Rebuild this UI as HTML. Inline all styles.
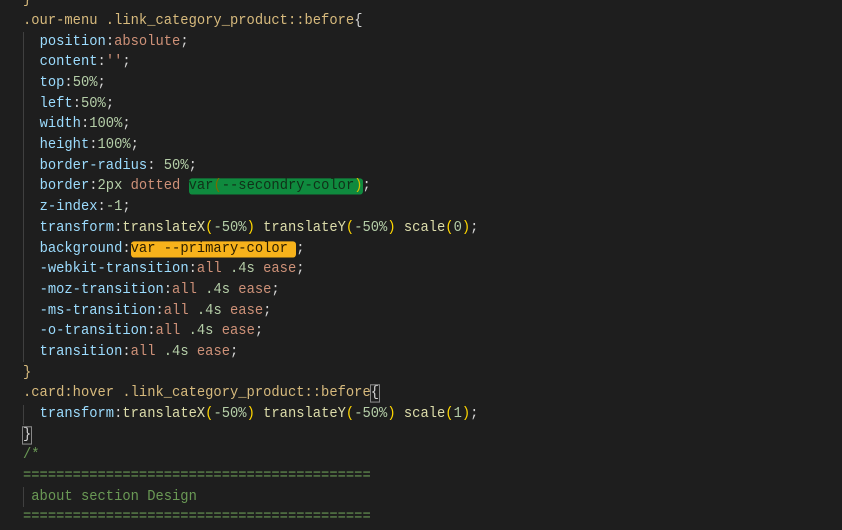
<!DOCTYPE html>
<html><head><meta charset="utf-8"><style>
html,body{margin:0;padding:0;background:#1e1e1e;width:842px;height:516px;overflow:hidden}
.c{position:absolute;left:23px;top:2px;font-family:"Liberation Mono",monospace;font-size:13.8px;color:#d4d4d4;white-space:pre}
.l{position:absolute;left:0;height:20.68px;line-height:20.68px;transform:scaleY(1.08);transform-origin:0 50%}
.s{color:#d7ba7d}.p{color:#9cdcfe}.v{color:#ce9178}.n{color:#b5cea8}.f{color:#dcdcaa}.b{color:#ffd700}.cm{color:#6a9955}
.hg{background:#0f8a3e;color:#103018;border-radius:3px}
.ho{background:#f7b21b;color:#2a1d00;border-radius:3px}
.g{position:absolute;left:23px;width:1px;background:#404040}
.cur{outline:1px solid #888}
</style></head><body>
<div class="g" style="top:32px;height:330px"></div>
<div class="g" style="top:405px;height:20px"></div>
<div class="g" style="top:487px;height:20px"></div>
<div class="c">
<div class="l s" style="top:-11px">}</div>
<div class="l" style="top:10px"><span class="s">.our-menu .link_category_product::before</span>{</div>
<div class="l" style="top:30.7px">  <span class="p">position</span>:<span class="v">absolute</span>;</div>
<div class="l" style="top:51.4px">  <span class="p">content</span>:<span class="v">''</span>;</div>
<div class="l" style="top:72.0px">  <span class="p">top</span>:<span class="n">50%</span>;</div>
<div class="l" style="top:92.7px">  <span class="p">left</span>:<span class="n">50%</span>;</div>
<div class="l" style="top:113.4px">  <span class="p">width</span>:<span class="n">100%</span>;</div>
<div class="l" style="top:134.1px">  <span class="p">height</span>:<span class="n">100%</span>;</div>
<div class="l" style="top:154.8px">  <span class="p">border-radius</span>: <span class="n">50%</span>;</div>
<div class="l" style="top:175.4px">  <span class="p">border</span>:<span class="n">2px</span> <span class="v">dotted</span> <span class="hg">var<span style="color:#7a6a00">(</span>--secondry-color<span style="color:#d8c000">)</span></span>;</div>
<div class="l" style="top:196.1px">  <span class="p">z-index</span>:<span class="n">-1</span>;</div>
<div class="l" style="top:216.8px">  <span class="p">transform</span>:<span class="f">translateX</span><span class="b">(</span><span class="n">-50%</span><span class="b">)</span> <span class="f">translateY</span><span class="b">(</span><span class="n">-50%</span><span class="b">)</span> <span class="f">scale</span><span class="b">(</span><span class="n">0</span><span class="b">)</span>;</div>
<div class="l" style="top:237.5px">  <span class="p">background</span>:<span class="ho">var --primary-color </span>;</div>
<div class="l" style="top:258.2px">  <span class="p">-webkit-transition</span>:<span class="v">all</span> <span class="n">.4s</span> <span class="v">ease</span>;</div>
<div class="l" style="top:278.8px">  <span class="p">-moz-transition</span>:<span class="v">all</span> <span class="n">.4s</span> <span class="v">ease</span>;</div>
<div class="l" style="top:299.5px">  <span class="p">-ms-transition</span>:<span class="v">all</span> <span class="n">.4s</span> <span class="v">ease</span>;</div>
<div class="l" style="top:320.2px">  <span class="p">-o-transition</span>:<span class="v">all</span> <span class="n">.4s</span> <span class="v">ease</span>;</div>
<div class="l" style="top:340.9px">  <span class="p">transition</span>:<span class="v">all</span> <span class="n">.4s</span> <span class="v">ease</span>;</div>
<div class="l s" style="top:361.6px">}</div>
<div class="l" style="top:382.2px"><span class="s">.card:hover .link_category_product::before</span><span class="cur">{</span></div>
<div class="l" style="top:402.9px">  <span class="p">transform</span>:<span class="f">translateX</span><span class="b">(</span><span class="n">-50%</span><span class="b">)</span> <span class="f">translateY</span><span class="b">(</span><span class="n">-50%</span><span class="b">)</span> <span class="f">scale</span><span class="b">(</span><span class="n">1</span><span class="b">)</span>;</div>
<div class="l" style="top:423.6px"><span class="cur">}</span></div>
<div class="l cm" style="top:444.3px">/*</div>
<div class="l cm" style="top:465.0px">==========================================</div>
<div class="l cm" style="top:485.6px"> about section Design</div>
<div class="l cm" style="top:506.3px">==========================================</div>
</div>
</body></html>
